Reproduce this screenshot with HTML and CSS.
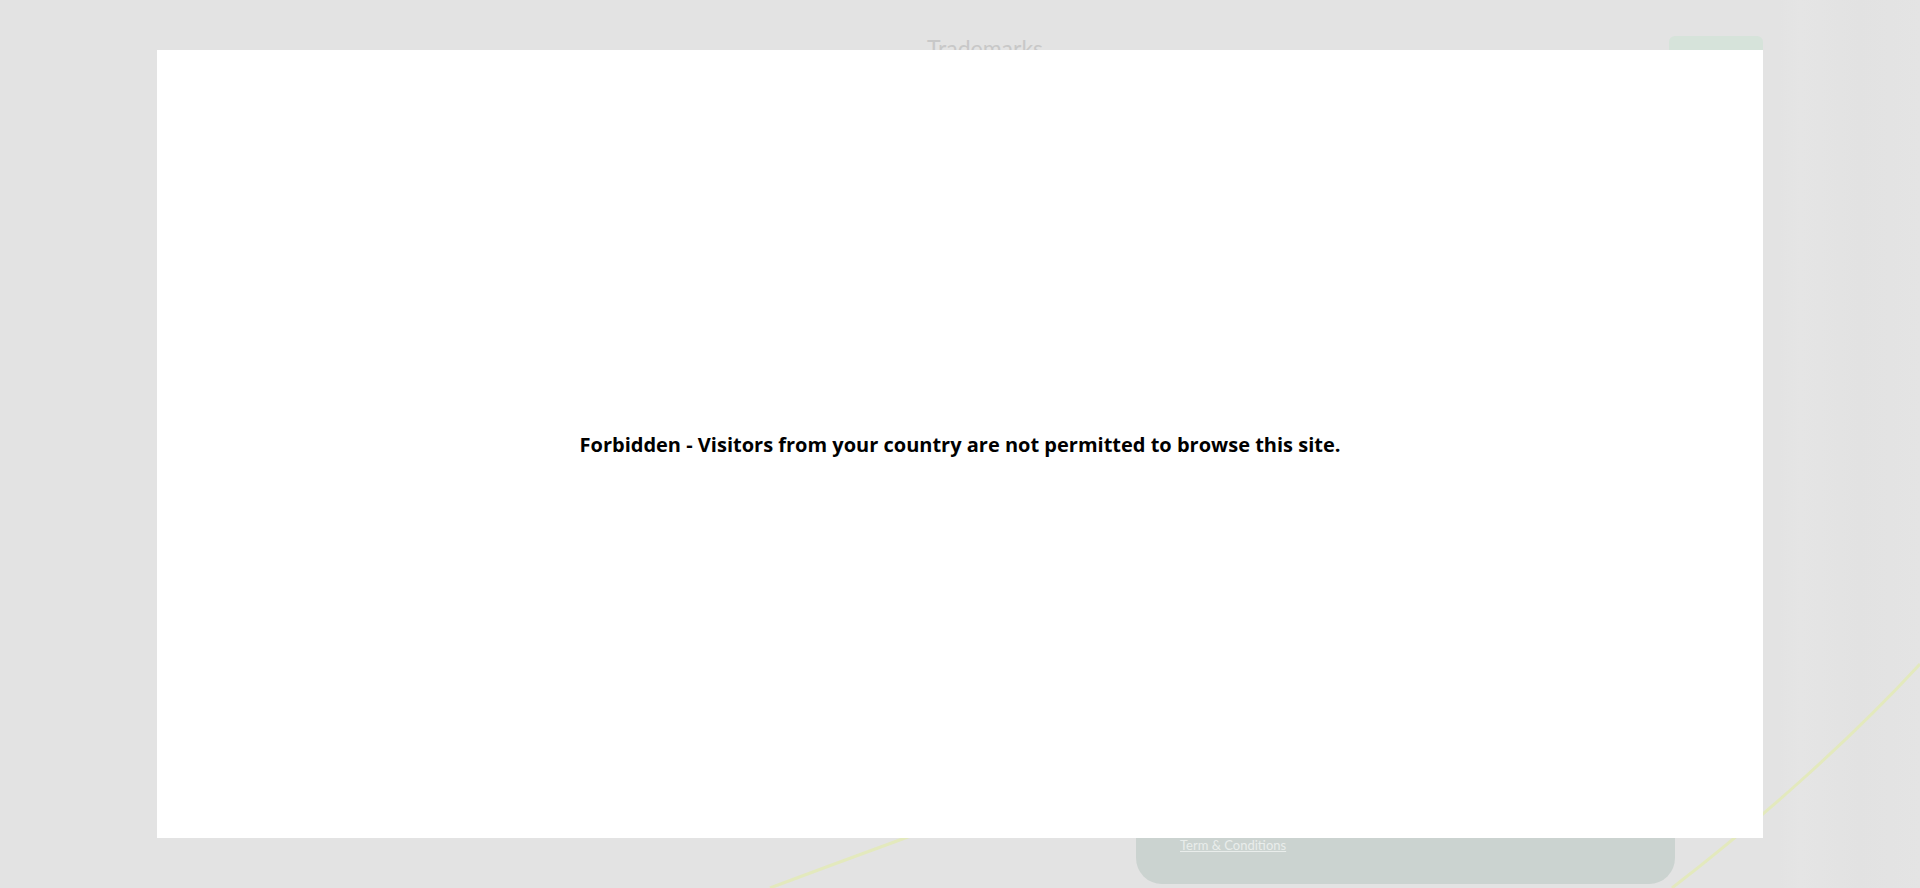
FILE: index.html
```html
<!DOCTYPE html>
<html lang="en">
<head>
  <meta charset="UTF-8" />
  <meta name="viewport" content="width=device-width, initial-scale=1.0" />
  <title>Forbidden</title>
  <link rel="stylesheet" href="styles.css">
</head>
<body>
  <div class="site">
    <svg class="site-lines" width="1920" height="888" viewBox="0 0 1920 888">
      <path d="M770 888 Q 850 858 960 818" />
      <path d="M1672 888 C 1760 820, 1850 740, 1920 664" />
    </svg>

    <header class="site-header">
      <div class="site-title">Trademarks</div>
      <div class="site-button"></div>
    </header>

    <footer class="site-footer">
      <div class="footer-card">
        <a class="footer-link" href="#">Term &amp; Conditions</a>
      </div>
    </footer>
  </div>

  <div class="modal">
    <p class="modal-text">Forbidden - Visitors from your country are not permitted to browse this site.</p>
  </div>
</body>
</html>
```

FILE: styles.css
```css
html, body {
  margin: 0;
  height: 100%;
}
body {
  background-color: #e3e3e3;
  font-family: 'Lato', 'Liberation Sans', sans-serif;
  overflow: hidden;
  position: relative;
}
.site {
  height: 888px;
  display: flex;
  flex-direction: column;
  justify-content: space-between;
  background: linear-gradient(90deg, #e3e3e3 0, #e3e3e3 1780px, #e5e5e5 1800px, #e2e2e2 1860px, #e4e4e4 1920px);
}
.site-lines {
  position: absolute;
  top: 0;
  left: 0;
}
.site-lines path {
  fill: none;
  stroke: #e3e9bd;
  stroke-width: 3;
}
.site-header {
  display: flex;
  align-items: flex-start;
  padding: 0 157px 0 927px;
  height: 60px;
}
.site-title {
  margin-top: 34px;
  font-size: 23px;
  color: #c8c8c8;
  flex-grow: 1;
}
.site-button {
  margin-top: 36px;
  width: 94px;
  height: 40px;
  background-color: #d6e3da;
  border-radius: 6px 6px 0 0;
}
.site-footer {
  display: flex;
  padding-left: 1136px;
}
.footer-card {
  width: 539px;
  height: 160px;
  margin-bottom: 4px;
  background-color: #cbd3d0;
  border-radius: 0 0 26px 26px;
  display: flex;
  align-items: flex-end;
  padding-bottom: 31px;
  box-sizing: border-box;
}
.footer-link {
  margin-left: 44px;
  font-size: 13px;
  color: #e9edeb;
  text-decoration: underline;
}
.modal {
  position: absolute;
  top: 50px;
  left: 157px;
  width: 1606px;
  height: 788px;
  background-color: #ffffff;
  display: flex;
  align-items: center;
  justify-content: center;
}
.modal-text {
  margin: 0;
  font-family: 'Open Sans', 'Liberation Sans', sans-serif;
  font-size: 20px;
  font-weight: bold;
  color: #000000;
}
```
